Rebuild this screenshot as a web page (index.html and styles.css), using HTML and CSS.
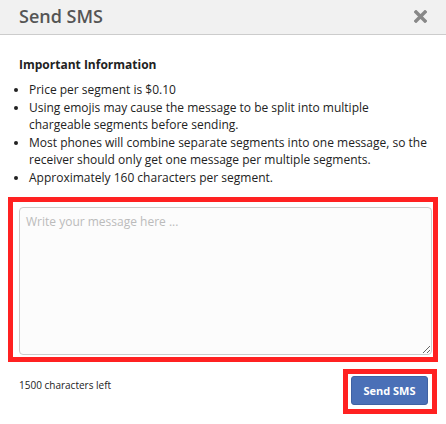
FILE: index.html
```html
<!DOCTYPE html>
<html lang="en">
<head>
  <meta charset="UTF-8" />
  <title>Send SMS</title>
  <link rel="stylesheet" href="styles.css">
</head>
<body>

  <div class="modal">
    <div class="modal-header">
      <div class="modal-title">Send SMS</div>
      <svg class="close" width="13" height="13" viewBox="0 0 13 13">
        <path d="M2 2 L11 11 M11 2 L2 11" stroke="#888" stroke-width="3.4" stroke-linecap="square"/>
      </svg>
    </div>

    <div class="modal-body">
      <h4>Important Information</h4>
      <ul class="info">
        <li>Price per segment is $0.10</li>
        <li>Using emojis may cause the message to be split into multiple<br>chargeable segments before sending.</li>
        <li>Most phones will combine separate segments into one message, so the receiver should only get one message per multiple segments.</li>
        <li>Approximately 160 characters per segment.</li>
      </ul>

      <div class="highlight msg-box">
        <textarea placeholder="Write your message here ..."></textarea>
      </div>

      <div class="footer-row">
        <div class="counter">1500 characters left</div>
        <div class="highlight btn-box">
          <button class="send-btn">Send SMS</button>
        </div>
      </div>
    </div>
  </div>

</body>
</html>
```

FILE: styles.css
```css
body {
  margin: 0;
  font-family: 'Open Sans', sans-serif;
  background: #fff;
  color: #222;
}

.modal-header {
  background: #f1f1f1;
  border-bottom: 1px solid #ccc;
  height: 35px;
  box-sizing: border-box;
  padding: 0 19px 2px 19px;
  display: flex;
  align-items: center;
  justify-content: space-between;
}

.modal-title {
  font-size: 18px;
  font-weight: 600;
  color: #555;
}

.modal-body {
  padding: 21px 8px 0 8px;
}

.modal-body h4 {
  margin: 0 0 8px 11px;
  font-size: 12px;
  font-weight: 700;
  line-height: 17px;
}

.info {
  margin: 0;
  padding-left: 21px;
  font-size: 12px;
  line-height: 17.6px;
}

.highlight {
  border: 5px solid #ff2121;
}

.msg-box {
  margin-top: 10px;
  padding: 5px 1px 2px 6px;
}

textarea {
  display: block;
  width: 100%;
  box-sizing: border-box;
  height: 148px;
  border: 1px solid #ccc;
  border-radius: 4px;
  background: #fcfcfc;
  padding: 5px 6px;
  font-family: 'Open Sans', sans-serif;
  font-size: 12px;
  resize: vertical;
}

textarea::placeholder {
  color: #bbb;
}

.footer-row {
  display: flex;
  justify-content: space-between;
  align-items: flex-start;
  margin-top: 7px;
}

.counter {
  font-size: 10px;
  padding: 9px 0 0 11px;
}

.btn-box {
  margin-right: 1px;
  padding: 2px 4px 4px 3px;
}

.send-btn {
  display: block;
  background: #4a70b7;
  border: 1px solid #3f62a3;
  border-radius: 3px;
  color: #fff;
  font-family: 'Open Sans', sans-serif;
  font-weight: 700;
  font-size: 11px;
  width: 77px;
  height: 29px;
}
```
